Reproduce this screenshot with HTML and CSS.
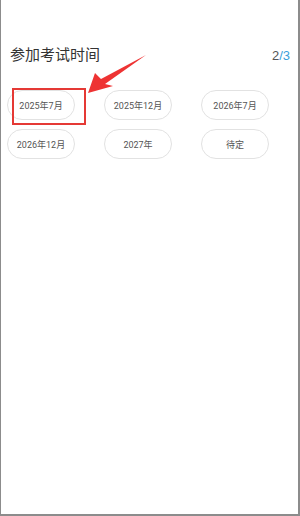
FILE: index.html
```html
<!DOCTYPE html>
<html lang="zh">
<head>
  <meta charset="UTF-8" />
  <meta name="viewport" content="width=device-width, initial-scale=1.0" />
  <title>参加考试时间</title>
  <link rel="stylesheet" href="styles.css">
</head>
<body>

  <div class="frame">
    <div class="head">
      <div class="title">参加考试时间</div>
      <div class="step"><span class="cur">2</span><span class="total">/3</span></div>
    </div>

    <div class="options">
      <div class="opt">2025年7月</div>
      <div class="opt">2025年12月</div>
      <div class="opt">2026年7月</div>
      <div class="opt">2026年12月</div>
      <div class="opt">2027年</div>
      <div class="opt">待定</div>
    </div>

    <!-- annotation -->
    <div class="mark"></div>
    <svg class="arrow" width="300" height="516" viewBox="0 0 300 516">
      <polygon points="88,93 95,73 101,79 146,55 105,84 113,86" fill="#ee3333" />
    </svg>
  </div>

</body>
</html>
```

FILE: styles.css
```css
html, body {
  margin: 0;
  padding: 0;
  background: #fff;
  font-family: "Noto Sans CJK SC", "Noto Sans", sans-serif;
}
.frame {
  position: relative;
  box-sizing: border-box;
  width: 300px;
  height: 516px;
  border-left: 1px solid #8c8c8c;
  border-right: 2px solid #8c8c8c;
  border-bottom: 2px solid #8c8c8c;
  padding-top: 43px;
}
.head {
  display: flex;
  justify-content: space-between;
  align-items: baseline;
  padding: 0 8px 0 9px;
}
.title {
  font-size: 15px;
  line-height: 22px;
  color: #333;
}
.step {
  font-family: "Liberation Sans", sans-serif;
  font-size: 13px;
  color: #555;
}
.step .total {
  color: #3a9fdc;
}
.options {
  display: grid;
  grid-template-columns: repeat(3, 68px);
  column-gap: 29px;
  row-gap: 9px;
  padding: 25px 0 0 6px;
}
.opt {
  height: 30px;
  border: 1px solid #e2e2e2;
  border-radius: 16px;
  box-sizing: border-box;
  display: flex;
  align-items: center;
  justify-content: center;
  font-family: Roboto, "Noto Sans CJK SC", sans-serif;
  font-size: 9px;
  color: #555;
}
.mark {
  position: absolute;
  left: 11px;
  top: 88px;
  width: 70px;
  height: 33px;
  border: 2px solid #e53935;
}
.arrow {
  position: absolute;
  left: -1px;
  top: 0;
}
```
